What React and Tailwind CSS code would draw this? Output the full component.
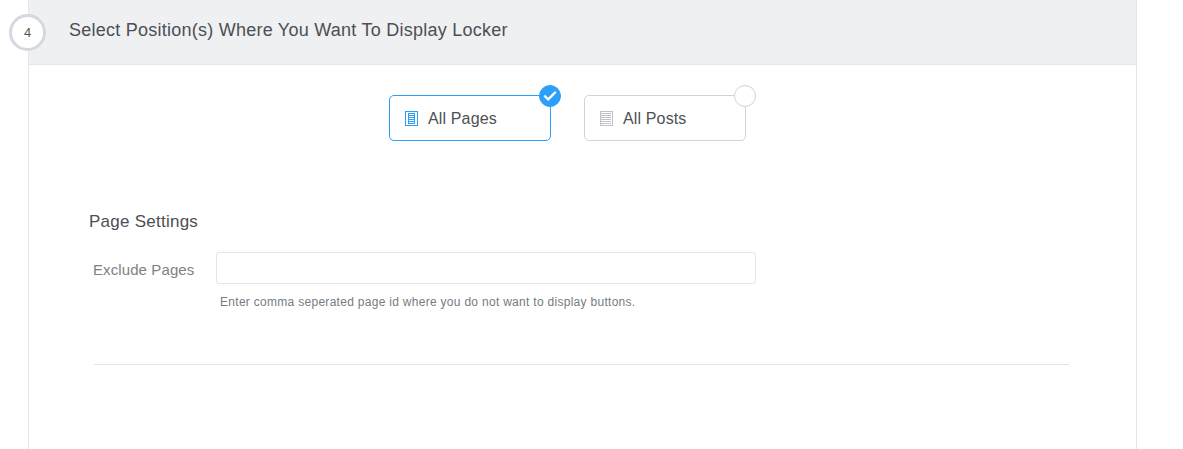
function PageIcon() {
  return (
    <svg width="13" height="15" viewBox="0 0 13 15" fill="none" stroke="#2c9ffb" shapeRendering="crispEdges">
      <rect x="0.5" y="0.5" width="12" height="14" />
      <path d="M3.5 2v11M9.5 2v11M3 2.5h7M3 4.5h7M3 6.5h7M3 8.5h7M3 10.5h7M3 12.5h7" />
    </svg>
  );
}

function PostIcon() {
  return (
    <svg width="13" height="15" viewBox="0 0 13 15" fill="none" stroke="#bfc3c8" shapeRendering="crispEdges">
      <rect x="0.5" y="0.5" width="12" height="14" />
      <path d="M1 2.5h10M1 4.5h10M1 6.5h10M1 8.5h10M1 10.5h10M1 12.5h10" />
    </svg>
  );
}

function Option({ icon, label, selected }) {
  return (
    <div
      className={`relative flex h-[46px] w-[162px] items-center gap-[10px] rounded-[5px] border pl-[15px] ${
        selected ? "border-[#2c9ffb]" : "border-[#d0d4d7]"
      }`}
    >
      {icon}
      <span className="pt-0.5 text-[16px] leading-5 tracking-[0.14px] text-[#4e5054]">{label}</span>
      <span
        className={`absolute -top-[11px] -right-[11px] flex size-[22px] items-center justify-center rounded-full border ${
          selected ? "border-[#2c9ffb] bg-[#2c9ffb]" : "border-[#d0d4d7] bg-white"
        }`}
      >
        {selected && (
          <svg width="14" height="12" viewBox="0 0 14 12" className="shrink-0" fill="none" stroke="white" strokeWidth="2.2">
            <path d="M1.3 5.6 5.2 9.4 12.7 1.9" />
          </svg>
        )}
      </span>
    </div>
  );
}

export default function App() {
  return (
    <div className="h-[449px] overflow-hidden bg-white pl-7 font-['Liberation_Sans',Arial,sans-serif]">
      <section className="h-full w-[1109px] border-x border-[#e3e6ea]">
        <header className="relative h-[65px] border-b border-[#e3e6ea] bg-[#eff0f2] pt-[18px] pl-10">
          <span className="absolute top-[14px] -left-5 flex size-[37px] items-center justify-center rounded-full border-3 border-[#d5d8e0] bg-white text-[13px] text-[#5a5552]">
            4
          </span>
          <h2 className="text-[18px] leading-6 tracking-[0.245px] whitespace-nowrap text-[#4c4f54]">
            Select Position(s) Where You Want To Display Locker
          </h2>
        </header>

        <div className="flex gap-[33px] pt-[30px] pl-[360px]">
          <Option icon={<PageIcon />} label="All Pages" selected />
          <Option icon={<PostIcon />} label="All Posts" />
        </div>

        <h3 className="mt-[69px] pl-[60px] text-[17px] leading-6 tracking-[0.25px] text-[#4c4f54]">Page Settings</h3>

        <div className="mt-[18px] flex pl-16">
          <label htmlFor="exclude" className="w-[123px] pt-2 text-[15px] leading-5 tracking-[0.1px] text-[#7d8184]">
            Exclude Pages
          </label>
          <div>
            <input id="exclude" className="block h-8 w-[540px] rounded-[3px] border border-[#e5e5e7] bg-white px-2 outline-none" />
            <p className="mt-[10px] pl-1 text-[12px] leading-4 tracking-[0.29px] whitespace-nowrap text-[#777b7f]">
              Enter comma seperated page id where you do not want to display buttons.
            </p>
          </div>
        </div>

        <hr className="mt-[54px] ml-[65px] w-[975px] border-[#e2e3e5]" />
      </section>
    </div>
  );
}
